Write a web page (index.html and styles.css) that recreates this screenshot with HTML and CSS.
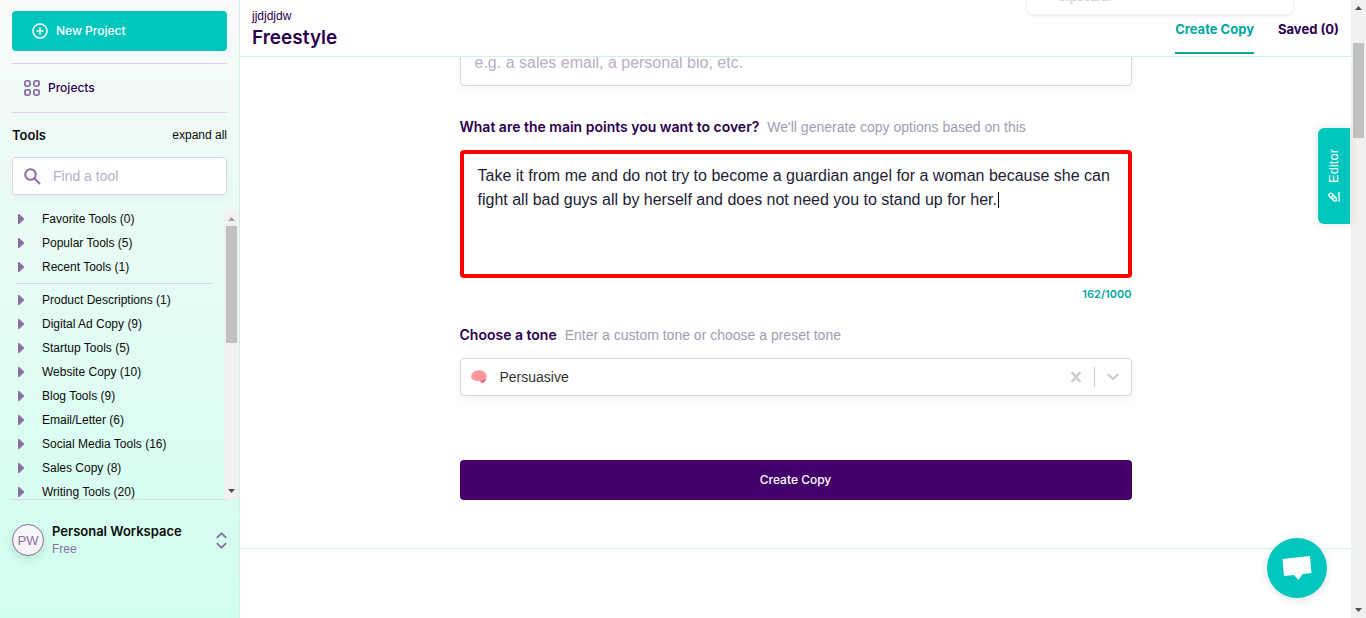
FILE: index.html
```html
<!DOCTYPE html>
<html lang="en">
<head>
<meta charset="utf-8">
<title>Freestyle</title>
<link rel="stylesheet" href="styles.css">
</head>
<body>
<div class="app">
  <aside class="sidebar">
    <div class="sidebar-top">
      <button class="new-project" type="button">
        <svg width="16" height="16" viewBox="0 0 16 16" fill="none" stroke="currentColor" stroke-width="1.5"><circle cx="8" cy="8" r="7"/><path d="M8 4.5v7M4.500 8h7"/></svg>
        New Project
      </button>
      <a class="projects" href="#projects">
        <svg width="16" height="16" viewBox="0 0 16 16" fill="none" stroke="#8b6fa3" stroke-width="1.800"><rect x=".9" y=".9" width="5.200" height="5.200" rx="1.500"/><rect x="9.900" y=".9" width="5.200" height="5.200" rx="1.500"/><rect x=".9" y="9.900" width="5.200" height="5.200" rx="1.500"/><rect x="9.900" y="9.900" width="5.200" height="5.200" rx="1.500"/></svg>
        Projects
      </a>
      <div class="tools-head">
        <h2>Tools</h2>
        <button class="plain" type="button">expand all</button>
      </div>
      <label class="search">
        <svg width="17" height="17" viewBox="0 0 17 17" fill="none" stroke="#8b6fa3" stroke-width="2"><circle cx="6.500" cy="6.500" r="5.300"/><path d="M10.500 10.500l5.500 5.500"/></svg>
        <input type="search" placeholder="Find a tool" aria-label="Find a tool">
      </label>
    </div>
    <div class="tools">
      <div class="tool-lists">
        <ul class="tool-list">
          <li><a href="#favorite">Favorite Tools (0)</a></li>
          <li><a href="#popular">Popular Tools (5)</a></li>
          <li><a href="#recent">Recent Tools (1)</a></li>
        </ul>
        <ul class="tool-list divided">
          <li><a href="#product">Product Descriptions (1)</a></li>
          <li><a href="#ads">Digital Ad Copy (9)</a></li>
          <li><a href="#startup">Startup Tools (5)</a></li>
          <li><a href="#website">Website Copy (10)</a></li>
          <li><a href="#blog">Blog Tools (9)</a></li>
          <li><a href="#email">Email/Letter (6)</a></li>
          <li><a href="#social">Social Media Tools (16)</a></li>
          <li><a href="#sales">Sales Copy (8)</a></li>
          <li><a href="#writing">Writing Tools (20)</a></li>
        </ul>
      </div>
      <div class="scrollbar" aria-hidden="true">
        <svg class="arrow muted" width="7" height="4" viewBox="0 0 7 4"><path d="M0 4L3.500 0L7 4z"/></svg>
        <span class="thumb thumb-list"></span>
        <svg class="arrow last" width="7" height="4" viewBox="0 0 7 4"><path d="M0 0h7L3.500 4z"/></svg>
      </div>
    </div>
    <button class="workspace" type="button">
      <span class="avatar">PW</span>
      <span class="workspace-text"><strong>Personal Workspace</strong><small>Free</small></span>
      <svg width="11" height="17" viewBox="0 0 11 17" fill="none" stroke="#8b6fa3" stroke-width="1.800"><path d="M.8 5.800L5.500 1.300L10.200 5.800M.8 11.200L5.500 15.700L10.200 11.200"/></svg>
    </button>
  </aside>

  <main class="main">
    <header class="header">
      <div>
        <p class="project-name">jjdjdjdw</p>
        <h1>Freestyle</h1>
      </div>
      <nav class="tabs">
        <a class="tab active" href="#create">Create Copy</a>
        <a class="tab" href="#saved">Saved (0)</a>
      </nav>
    </header>
    <div class="content">
      <form class="form">
        <input class="field kind" type="text" placeholder="e.g. a sales email, a personal bio, etc." aria-label="What are you writing?">
        <div class="label-row">
          <label for="points">What are the main points you want to cover?</label>
          <span>We'll generate copy options based on this</span>
        </div>
        <div class="points-wrap">
          <textarea class="points" id="points" spellcheck="false">Take it from me and do not try to become a guardian angel for a woman because she can fight all bad guys all by herself and does not need you to stand up for her.</textarea>
          <span class="caret"></span>
        </div>
        <p class="count">162/1000</p>
        <div class="label-row tone-row">
          <label for="tone">Choose a tone</label>
          <span>Enter a custom tone or choose a preset tone</span>
        </div>
        <div class="select-wrap">
          <svg class="brain" width="16" height="13" viewBox="0 0 16 13"><path fill="#ff9b9f" d="M.4 8C-.4 5 1 2.500 3.800 1.200C6.500 0 10.500-.1 13 1.500C15.500 3.200 16.500 6.500 15 9.300C14.500 11.500 12.500 13 10.500 12.500Q9.300 12 8.500 11Q6 11.600 4 10.600Q1.500 10.400.4 8z"/><path fill="#df6873" d="M9 11.300C10.500 10.200 13 10 15 9.300C14.500 11.800 12.500 13.200 10.500 12.500z"/><path fill="none" stroke="#f4858c" stroke-width=".6" d="M3 3.500c1-1 2 0 2-1M6 4c2-1 1-2 3-2M10 4c1-1 2 0 3 1M2.500 6c1 1 2-1 3 0s2 0 3 1M10 7c1-1 2-1 3.500 0M5 8.500c1 1 2 0 3 .5"/></svg>
          <select class="field tone" id="tone"><option>Persuasive</option></select>
          <div class="select-tools">
            <button class="plain clear" type="button" aria-label="Clear tone"><svg width="10" height="12" viewBox="0 0 10 12" fill="none" stroke="#ccc" stroke-width="2.400" stroke-linecap="round"><path d="M1.300 1.800l7.400 8.400M8.700 1.800L1.300 10.200"/></svg></button>
            <svg class="chevron" width="12" height="8" viewBox="0 0 12 8" fill="none" stroke="#ccc" stroke-width="2.200" stroke-linecap="round"><path d="M1.300 1.500L6 6L10.700 1.500"/></svg>
          </div>
        </div>
        <button class="submit" type="submit">Create Copy</button>
      </form>
    </div>
    <div class="toast">clipboard.</div>
    <button class="editor" type="button">
      <svg width="12" height="12" viewBox="0 0 12 12" fill="none" stroke="currentColor" stroke-width="1.300"><path d="M1 11h10M2 8.500L2.300 5.800L7 1.200Q8.200.4 9.300 1.500T9.500 3.800L4.900 8.300L2 8.500M5.300 3l2.500 2.500M3.800 4.700l2.200 2.200"/></svg>
      Editor
    </button>
    <button class="chat" type="button" aria-label="Open chat">
      <svg width="30" height="26" viewBox="0 0 30 26" fill="#fff"><path d="M.5 4L28 1L29.500 18L20.500 18.900L16.500 25L12 20L2 21z"/></svg>
    </button>
  </main>

  <div class="scrollbar page" aria-hidden="true">
    <svg class="arrow" width="7" height="4" viewBox="0 0 7 4"><path d="M0 4L3.500 0L7 4z"/></svg>
    <span class="thumb thumb-page"></span>
    <svg class="arrow last" width="7" height="4" viewBox="0 0 7 4"><path d="M0 0h7L3.500 4z"/></svg>
  </div>
</div>
</body>
</html>
```
FILE: styles.css
```css
* { box-sizing: border-box; }

body {
  margin: 0;
  font-family: "Liberation Sans", Arial, sans-serif;
  font-size: 12px;
  line-height: 16px;
  color: #2b004e;
  background: #fff;
}

h1, h2, p, ul { margin: 0; padding: 0; }
a { color: inherit; text-decoration: none; }
svg { display: block; flex: none; }
button, input, select, textarea { font: inherit; color: inherit; }
button { border: 0; padding: 0; background: none; cursor: pointer; }

h1, h2, .new-project, .projects, .tabs, .label-row label, .count, .submit, .workspace strong {
  font-family: Inter, Arial, sans-serif;
}

.app { display: flex; height: 100vh; overflow: hidden; }

/* Sidebar */
.sidebar {
  flex: none;
  width: 240px;
  display: flex;
  flex-direction: column;
  border-right: 1px solid #d5f0e2;
  background: linear-gradient(#f9fbfa, #ebfbf5 30%, #ddfdf2 68%, #d1ffee);
  color: #0b0b0b;
}
.sidebar-top { padding: 11px 12px 0; }
.new-project {
  display: flex;
  align-items: center;
  gap: 8px;
  width: 100%;
  height: 40px;
  padding-left: 20px;
  border-radius: 4px;
  background: #00c6be;
  color: #fff;
  font-weight: 500;
}
.projects {
  display: flex;
  align-items: center;
  gap: 8px;
  height: 50px;
  margin-top: 12px;
  padding-left: 12px;
  border: solid #e0d2ea;
  border-width: 1px 0;
  color: #2b004e;
  font-weight: 500;
}
.tools-head {
  display: flex;
  justify-content: space-between;
  align-items: center;
  padding: 12px 0;
}
.tools-head h2 { font-size: 13px; line-height: 20px; font-weight: 600; }
.search {
  display: flex;
  align-items: center;
  height: 38px;
  gap: 12px;
  padding: 0 11px;
  border: 1px solid #e0d2ea;
  border-radius: 4px;
  background: #fff;
  box-shadow: 0 4px 8px rgba(0, 100, 80, .05);
}
.search input {
  width: 100%;
  min-width: 0;
  border: 0;
  padding: 0;
  outline: 0;
  background: none;
  font-size: 14px;
}
::placeholder { color: #b9adc8; opacity: 1; }

.tools {
  flex: none;
  display: flex;
  height: 288px;
  margin-top: 16px;
  overflow: hidden;
}
.tool-lists { flex: 1; padding: 0 12px 0 16px; overflow: hidden; }
.tool-list { list-style: none; margin-top: -4px; }
.tool-list a {
  display: flex;
  align-items: center;
  gap: 18px;
  height: 24px;
  padding-left: 2px;
  white-space: nowrap;
}
.tool-list a::before {
  content: "";
  width: 6px;
  height: 10px;
  background: #8b6fa3;
  clip-path: polygon(0 0, 20% 0, 100% 45%, 100% 55%, 20% 100%, 0 100%);
}
.tool-list + .tool-list { margin-top: 4px; padding-top: 4px; }
.divided { border-top: 1px solid #e0d2ea; }

.scrollbar {
  flex: none;
  width: 15px;
  display: flex;
  flex-direction: column;
  align-items: center;
  padding: 6px 0;
  background: #f1f1f1;
}
.arrow { fill: #505050; }
.arrow.muted { fill: #a3a3a3; }
.arrow.last { margin-top: auto; }
.thumb { width: 11px; background: #c1c1c1; }
.thumb-list { height: 117px; margin-top: 5px; }
.thumb-page { height: 95px; margin-top: 33px; }

.workspace {
  display: flex;
  align-items: center;
  gap: 8px;
  margin: 0 12px;
  padding-top: 22px;
  border-top: 1px solid #e0d2ea;
  text-align: left;
}
.avatar {
  width: 32px;
  height: 32px;
  border: 1px solid #8b6fa3;
  border-radius: 50%;
  background: #f8f5f8;
  box-shadow: 0 4px 8px rgba(0, 100, 80, .15);
  color: #8b6fa3;
  font-size: 13px;
  line-height: 32px;
  text-align: center;
}
.workspace-text { flex: 1; white-space: nowrap; }
.workspace strong, .workspace small { display: block; }
.workspace strong { font-size: 13px; line-height: 18px; font-weight: 600; }
.workspace small { font-size: 12px; line-height: 18px; color: #8b6fa3; }

/* Main area */
.main {
  position: relative;
  flex: 1;
  min-width: 0;
  display: flex;
  flex-direction: column;
}
.header {
  flex: none;
  display: flex;
  justify-content: space-between;
  height: 57px;
  padding: 8px 12px 0;
  border-bottom: 1px solid #d5f0e2;
}
.project-name { font-size: 12px; }
h1 { font-size: 19px; line-height: 28px; font-weight: 600; }
.tabs { display: flex; gap: 24px; font-size: 13px; font-weight: 700; }
.tab { height: 46px; line-height: 42px; }
.tab.active { color: #00a8a0; border-bottom: 2px solid #00a8a0; }

.content {
  flex: none;
  padding: 0 24px 48px;
  overflow: hidden;
  border-bottom: 1px solid #d5f0e2;
}
.form {
  max-width: 672px;
  margin: 0 auto;
  display: flex;
  flex-direction: column;
}
.field {
  width: 100%;
  border: 1px solid #e0d2ea;
  border-radius: 4px;
  outline: 0;
  background: #fff;
  box-shadow: 0 4px 8px rgba(0, 100, 80, .05);
}
.kind { height: 46px; margin-top: -17px; padding: 0 14px; font-size: 16px; }
.label-row {
  display: flex;
  gap: 8px;
  margin-top: 31px;
  font-size: 14px;
  line-height: 20px;
  white-space: nowrap;
}
.label-row label { font-weight: 600; }
.label-row span { color: #a09db2; }
.points-wrap { position: relative; margin-top: 13px; }
.points {
  display: block;
  width: 100%;
  height: 128px;
  padding: 10px 14px;
  border: 4px solid #f00;
  border-radius: 4px;
  outline: 0;
  resize: none;
  overflow: hidden;
  font-size: 16px;
  line-height: 24px;
  color: #221c35;
}
.caret {
  position: absolute;
  left: 538px;
  top: 42px;
  width: 1px;
  height: 16px;
  background: #111;
}
.count {
  margin-top: 8px;
  text-align: right;
  font-size: 11px;
  font-weight: 600;
  color: #00a8a0;
}
.tone-row { margin-top: 23px; }
.select-wrap { position: relative; margin-top: 13px; }
.brain { position: absolute; left: 11px; top: 12px; }
.tone {
  display: block;
  height: 38px;
  padding: 0 80px 0 39px;
  appearance: none;
  font-size: 14px;
  color: #333;
}
.select-tools {
  position: absolute;
  inset: 0 13px 0 auto;
  display: flex;
  align-items: center;
}
.clear { padding-right: 13px; }
.chevron { box-sizing: content-box; padding: 6px 0 6px 12px; border-left: 1px solid #ccc; }
.submit {
  height: 40px;
  margin-top: 64px;
  border-radius: 4px;
  background: #43006a;
  color: #fff;
  font-weight: 500;
}

/* Floating items */
.toast {
  position: absolute;
  top: -22px;
  right: 58px;
  width: 266px;
  height: 36px;
  padding: 8px 32px;
  border-radius: 6px;
  background: #fff;
  box-shadow: 0 1px 5px rgba(0, 0, 0, .1);
  color: #ccc;
  line-height: 22px;
}
.editor {
  position: absolute;
  top: 128px;
  right: 1px;
  width: 32px;
  height: 96px;
  display: flex;
  align-items: center;
  justify-content: center;
  gap: 8px;
  writing-mode: vertical-rl;
  transform: rotate(180deg);
  border-radius: 0 6px 6px 0;
  background: #00c6be;
  box-shadow: 0 0 8px rgba(0, 100, 80, .15);
  color: #fff;
  font-size: 13px;
}
.editor svg { transform: rotate(90deg); }
.chat {
  position: absolute;
  right: 24px;
  bottom: 20px;
  width: 60px;
  height: 60px;
  display: grid;
  place-items: center;
  border-radius: 50%;
  background: #00c6be;
  box-shadow: 0 2px 8px rgba(0, 0, 0, .12);
}
```
